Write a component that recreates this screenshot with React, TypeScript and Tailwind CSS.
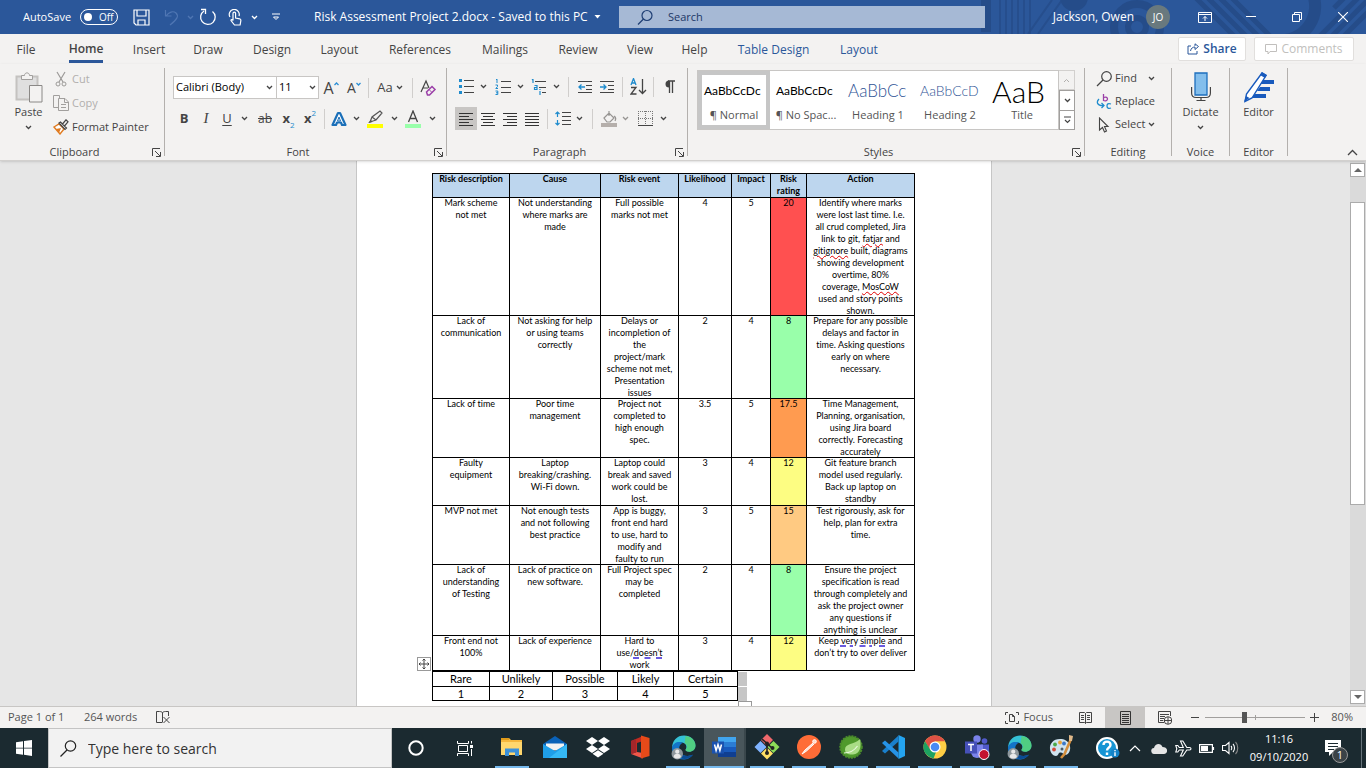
import React, { ReactNode } from "react";

type Kids = { children?: ReactNode };

/* ---------- small shared pieces ---------- */

function Chevron({ color = "#444" }: { color?: string }) {
  return (
    <svg width="7" height="5" viewBox="0 0 7 5" className="shrink-0" aria-hidden="true">
      <path d="M1 1l2.5 2.5L6 1" fill="none" stroke={color} strokeWidth="1.3" />
    </svg>
  );
}

function Svg({ w, h, children }: { w: number; h: number; children: ReactNode }) {
  return (
    <svg width={w} height={h} viewBox={`0 0 ${w} ${h}`} fill="none" className="shrink-0" aria-hidden="true">
      {children}
    </svg>
  );
}

function Tool({ label, className = "", children }: Kids & { label: string; className?: string }) {
  return (
    <button type="button" aria-label={label} className={`flex h-[23px] shrink-0 items-center justify-center ${className}`}>
      {children}
    </button>
  );
}

function Divider({ className }: { className: string }) {
  return (
    <span className={`flex h-5 shrink-0 justify-center ${className}`}>
      <span className="h-full w-px bg-[#d0cecc]" />
    </span>
  );
}

function Group({ title, className, launcher, children }: Kids & { title: string; className: string; launcher?: boolean }) {
  return (
    <>
      <section aria-label={title} className={`flex shrink-0 flex-col ${className}`}>
        <div className="h-20">{children}</div>
        <div className="flex h-4 items-center">
          <span className="flex-1 text-center">{title}</span>
          {launcher && (
            <button type="button" aria-label={`${title} settings`} className="flex w-[15px] justify-center">
              <Svg w={9} h={9}>
                <path d="M.5 8V.5H8M3 3l5 5M8.5 4v4.5H4" stroke="#444" />
              </Svg>
            </button>
          )}
        </div>
      </section>
      <span className="mt-1 h-[88px] w-px shrink-0 bg-[#b3b0ad]" />
    </>
  );
}

/* ---------- title bar ---------- */

function TitleBar() {
  return (
    <header className="relative flex h-[34px] shrink-0 items-center overflow-hidden bg-[#2b579a] text-[12px] text-white">
      <svg className="absolute top-0 right-0 opacity-80" width="400" height="34" viewBox="0 0 400 34" fill="none" aria-hidden="true">
        <g stroke="#244a86">
          <path d="M20 32V0" strokeWidth="10" />
          <path d="M34 34V0M40 34V0M46 34V0M52 34V0M58 34V0M64 34V0" strokeWidth="2" opacity=".8" />
          <path d="M62 34L86 0M72 34L96 0" strokeWidth="2" opacity=".8" />
          <circle cx="171" cy="27" r="9" strokeWidth="6" />
          <circle cx="171" cy="27" r="23" strokeWidth="8" />
          <path d="M240-4l40 40M252-4l40 40M264-4l40 40M228-4l40 40" strokeWidth="5" />
          <path d="M345-10a34 34 0 0 1-34 50" strokeWidth="12" />
          <path d="M366 36l40-40M378 36l40-40M354 36l40-40M368 8l14-14" strokeWidth="5" />
        </g>
        <circle cx="108" cy="-3" r="14" fill="#244a86" />
      </svg>
      <div className="relative flex w-[314px] shrink-0 items-center pl-[23px]">
        <label htmlFor="autosave" className="w-[57px] text-[11px]">AutoSave</label>
        <button id="autosave" type="button" role="switch" aria-checked="false" className="flex h-4 w-[38px] items-center gap-[7px] rounded-full border border-white pl-[3px] text-[10px]">
          <span className="size-2 rounded-full bg-white" />
          <span>Off</span>
        </button>
        <Tool label="Save" className="ml-[11px] w-6">
          <Svg w={17} h={17}>
            <path d="M1 1h15v15H3l-2-2V1zM4 1v6h9V1M5 16v-5h7v5" stroke="#fff" strokeWidth="1.2" />
          </Svg>
        </Tool>
        <Tool label="Undo" className="ml-[5px] w-7">
          <Svg w={16} h={17}>
            <path d="M1.500 1v6h6M2 7C5 3 9 1.500 12 4c3 3 1.500 6-6 12" stroke="#4f76b3" strokeWidth="1.200" />
          </Svg>
        </Tool>
        <Tool label="Undo history" className="w-2"><Chevron color="#4f76b3" /></Tool>
        <Tool label="Redo" className="w-7">
          <Svg w={18} h={18}>
            <path d="M13.500 3.500A7.300 7.300 0 1 1 5 3M2 1.500h4.500V6" stroke="#fff" strokeWidth="1.300" />
          </Svg>
        </Tool>
        <Tool label="Touch mode" className="w-[26px]">
          <Svg w={14} h={17}>
            <path d="M5 9V4.500a1.300 1.300 0 0 1 2.600 0V9l4 .8c1 .3 1.400 1 1.200 2l-.7 4.200H6.500L3 11.500c0-1.500 1.500-1 2 0zM2 8a5 5 0 1 1 9-1" stroke="#fff" strokeWidth="1.200" />
          </Svg>
        </Tool>
        <Tool label="Touch mode options" className="w-3"><Chevron color="#fff" /></Tool>
        <Tool label="Customise quick access" className="ml-2 w-4">
          <Svg w={8} h={8}>
            <path d="M0 1h8M1.500 4L4 6.500 6.500 4z" stroke="#fff" />
          </Svg>
        </Tool>
      </div>
      <div className="relative flex w-[305px] shrink-0 items-center gap-[6px] whitespace-nowrap">
        <h1>Risk Assessment Project 2.docx - Saved to this PC</h1>
        <Svg w={7} h={4}><path d="M.5 0h6L3.500 3.500z" fill="#fff" /></Svg>
      </div>
      <label className="relative flex h-[22px] w-[366px] items-center gap-[14px] bg-[#a6b9d5] pl-[18px]">
        <Svg w={17} h={17}>
          <circle cx="10" cy="6.500" r="5" stroke="#1f3f74" strokeWidth="1.200" />
          <path d="M6.500 10L1 15.500" stroke="#1f3f74" strokeWidth="1.200" />
        </Svg>
        <input aria-label="Search" placeholder="Search" className="w-full bg-transparent text-[11px] outline-none placeholder:text-[#1c3766]" />
      </label>
      <div className="relative flex flex-1 items-center justify-end">
        <span className="mr-3">Jackson, Owen</span>
        <span className="mr-3 flex size-6 items-center justify-center rounded-full bg-[#69797e] text-[10px]">JO</span>
        <Tool label="Ribbon display options" className="w-[46px]">
          <Svg w={14} h={11}>
            <path d="M.5.5h13v10H.5zM.5 2.500h13M7 9V4.500M5 6.500l2-2 2 2" stroke="#fff" />
          </Svg>
        </Tool>
        <Tool label="Minimise" className="w-[46px]"><Svg w={10} h={2}><path d="M0 .5h10" stroke="#fff" /></Svg></Tool>
        <Tool label="Restore" className="w-[46px]">
          <Svg w={10} h={10}><path d="M.5 2.500h7v7h-7zM2.500 2.500v-2h7v7h-2" stroke="#fff" /></Svg>
        </Tool>
        <Tool label="Close" className="w-[46px]">
          <Svg w={10} h={10}><path d="M0 0l10 10M10 0L0 10" stroke="#fff" strokeWidth="1.100" /></Svg>
        </Tool>
      </div>
    </header>
  );
}

/* ---------- tabs ---------- */

const tabs: [string, string][] = [
  ["File", "w-[52px]"], ["Home", "w-[68px]"], ["Insert", "w-[58px]"], ["Draw", "w-[60px]"], ["Design", "w-[68px]"],
  ["Layout", "w-[67px]"], ["References", "w-[94px]"], ["Mailings", "w-[76px]"], ["Review", "w-[70px]"], ["View", "w-[54px]"],
  ["Help", "w-[55px]"], ["Table Design", "w-[103px]"], ["Layout", "w-[68px]"],
];

function Tabs() {
  return (
    <nav className="flex h-[30px] shrink-0 items-center text-[12px] text-[#444]">
      {tabs.map(([name, width], i) => (
        <button key={i} type="button" className={`flex h-full shrink-0 items-center justify-center ${width}`}>
          <span className={
            i === 1 ? "border-b-[3px] border-[#2b579a] pt-1 pb-[2px] leading-[18px] font-semibold"
              : i > 10 ? "pt-px text-[#2b579a]" : "pt-px"
          }>{name}</span>
        </button>
      ))}
      <div className="flex flex-1 justify-end gap-2 pr-3">
        <button type="button" className="flex h-6 w-[68px] items-center justify-center gap-1 rounded-[2px] border border-[#e1dfdd] bg-white font-semibold text-[#2b579a]">
          <Svg w={12} h={12}>
            <path d="M4 3H1v8h9V8M3.500 8C4 5 6 4 8 4v2.500L11.500 3.500 8 .8V3" stroke="#2b579a" />
          </Svg>
          Share
        </button>
        <button type="button" disabled className="flex h-6 w-[100px] items-center justify-center gap-1 rounded-[2px] border border-[#e1dfdd] bg-white text-[#c1bfbd]">
          <Svg w={12} h={11}>
            <path d="M.5.500h11v7H5L3 10V7.500H.5z" stroke="#c1bfbd" />
          </Svg>
          Comments
        </button>
      </div>
    </nav>
  );
}

/* ---------- ribbon ---------- */

function Clipboard() {
  return (
    <Group title="Clipboard" launcher className="w-[164px]">
      <div className="flex">
        <button type="button" className="flex w-[53px] flex-col items-center pt-2 pl-1 leading-[18px]">
          <Svg w={28} h={31}>
            <path d="M1.500 4.500h21v23h-21z" fill="#dfdfdf" stroke="#c4c2c0" strokeWidth="2" />
            <path d="M6.500 7.500V3.500h3C9.500 0 14.500 0 14.500 3.500h3v4z" fill="#f3f2f1" stroke="#a19f9d" />
            <path d="M14.500 13.500h12.500v16.500H14.500z" fill="#f3f2f1" stroke="#8a8886" />
          </Svg>
          <span className="mb-1">Paste</span>
          <Chevron />
        </button>
        <div className="flex flex-col pt-[3px]">
          <button type="button" disabled className="flex h-6 items-center gap-[3px] text-[#b1afad]">
            <Svg w={16} h={17}>
              <path d="M4 1l6 10M12 1L6 11" stroke="#9c9a98" strokeWidth="1.200" />
              <circle cx="5" cy="13" r="2" stroke="#9c9a98" /><circle cx="11" cy="13" r="2" stroke="#9c9a98" />
            </Svg>
            Cut
          </button>
          <button type="button" disabled className="flex h-6 items-center gap-[3px] text-[#b1afad]">
            <Svg w={16} h={16}>
              <path d="M5 12.500H.5V.5h6v3M5.500 3.500H12l3.500 3.500v8.500h-10zM11.500 3.500v4h4M8 9.500h5M8 12.500h5" stroke="#a19f9d" />
            </Svg>
            Copy
          </button>
          <button type="button" className="flex h-6 items-center gap-[3px]">
            <Svg w={16} h={16}>
              <path d="M1 8l5-3 5 5-4 5z" fill="#fff" stroke="#e07b20" strokeWidth="1.400" />
              <path d="M3 10l5-1-2 5z" fill="#e07b20" />
              <path d="M6 4l1.500-1 6 6L12 10.500zM9.500 5L13 .8l2 2L11.500 7" fill="#f3f2f1" stroke="#444" strokeWidth="1.200" />
            </Svg>
            Format Painter
          </button>
        </div>
      </div>
    </Group>
  );
}

function FontGroup() {
  return (
    <Group title="Font" launcher className="w-[281px]">
      <div className="flex items-center pt-3 pl-2">
        <div className="relative w-[104px]">
          <select aria-label="Font" className="h-[23px] w-full appearance-none border border-[#c8c6c4] bg-white pl-[2px] text-black">
            <option>Calibri (Body)</option>
          </select>
          <span className="pointer-events-none absolute top-[9px] right-1"><Chevron /></span>
        </div>
        <div className="relative -ml-px w-[43px]">
          <select aria-label="Font size" className="h-[23px] w-full appearance-none border border-[#c8c6c4] bg-white pl-[2px] text-black">
            <option>11</option>
          </select>
          <span className="pointer-events-none absolute top-[9px] right-[3px]"><Chevron /></span>
        </div>
        <Tool label="Grow font" className="w-6">
          <span className="text-[16px] leading-4">A</span>
          <Svg w={5} h={14}><path d="M.5 4l2-2 2 2" stroke="#2b8fd6" strokeWidth="1.300" /></Svg>
        </Tool>
        <Tool label="Shrink font" className="w-[22px]">
          <span className="text-[14px] leading-4">A</span>
          <Svg w={5} h={14}><path d="M.5 2l2 2 2-2" stroke="#2b8fd6" strokeWidth="1.300" /></Svg>
        </Tool>
        <Divider className="w-[7px]" />
        <Tool label="Change case" className="w-[36px] gap-[3px]">
          <span className="text-[13px]">Aa</span><Chevron />
        </Tool>
        <Divider className="w-2" />
        <Tool label="Clear formatting" className="relative w-6">
          <Svg w={18} h={18}>
            <path d="M2 13L7 2l3 7M4 9h5" stroke="#444" strokeWidth="1.200" />
            <path d="M7.500 13L13 7.500l3 3-5.500 5.500h-2z" fill="#f3f2f1" stroke="#9b3fa8" strokeWidth="1.500" /><path d="M10 10.500l3 3" stroke="#9b3fa8" />
          </Svg>
        </Tool>
      </div>
      <div className="flex items-center pt-2 pl-2 text-[14px]">
        <Tool label="Bold" className="w-[22px]"><b className="text-[13px]">B</b></Tool>
        <Tool label="Italic" className="w-[22px]"><i className="font-['Liberation_Serif',serif] text-[15px]">I</i></Tool>
        <Tool label="Underline" className="w-5"><u className="text-[13px] underline-offset-2">U</u></Tool>
        <Tool label="Underline style" className="w-[15px]"><Chevron /></Tool>
        <Tool label="Strikethrough" className="w-[26px]"><s className="text-[12px]">ab</s></Tool>
        <Tool label="Subscript" className="w-[21px]"><b className="text-[13px]">x</b><span className="pt-3 text-[8px] text-[#1e8bcd]">2</span></Tool>
        <Tool label="Superscript" className="w-[22px]"><b className="text-[13px]">x</b><span className="pb-3 text-[8px] text-[#1e8bcd]">2</span></Tool>
        <Divider className="w-[7px]" />
        <Tool label="Text effects" className="w-[22px]">
          <Svg w={16} h={16}>
            <path d="M1.500 14L7 2h2l5.500 12H11l-1-2.500H6L5 14z" fill="#fff" stroke="#1a6fb8" strokeWidth="2.200" strokeLinejoin="round" />
            <path d="M8 6l1.500 4h-3z" fill="#f3f2f1" stroke="#1a6fb8" />
          </Svg>
        </Tool>
        <Tool label="Text effect options" className="w-3"><Chevron /></Tool>
        <Tool label="Highlight" className="w-[26px]">
          <Svg w={16} h={18}>
            <path d="M0 14h16v4H0z" fill="#ffff00" />
            <path d="M3 12l2-5 8-6 2 2-6 7-3 1zM5 7l4 3" stroke="#555" strokeWidth="1.200" /><path d="M1 13l3-3 1.500 2z" fill="#555" />
          </Svg>
        </Tool>
        <Tool label="Highlight colour" className="w-3"><Chevron /></Tool>
        <Tool label="Font colour" className="w-[26px]">
          <Svg w={16} h={18}>
            <path d="M0 14h16v4H0z" fill="#99ffaa" />
            <path d="M3.500 12L8 1l4.500 11M5 8.500h6" stroke="#444" strokeWidth="1.300" />
          </Svg>
        </Tool>
        <Tool label="Font colour options" className="w-3"><Chevron /></Tool>
      </div>
    </Group>
  );
}

function AlignIcon({ rows }: { rows: string }) {
  return <Svg w={14} h={14}><path d={rows} stroke="#333" strokeWidth="1" /></Svg>;
}

function Paragraph() {
  return (
    <Group title="Paragraph" launcher className="w-[240px]">
      <div className="flex items-center pt-[11px] pl-2">
        <Tool label="Bullets" className="w-[22px]">
          <Svg w={16} h={15}>
            <path d="M1 0h3v3H1zM1 6h3v3H1zM1 12h3v3H1z" fill="#1e8bcd" /><path d="M6 1.500h10M6 7.500h10M6 13.500h10" stroke="#444" />
          </Svg>
        </Tool>
        <Tool label="Bullet styles" className="w-[13px]"><Chevron /></Tool>
        <Tool label="Numbering" className="w-[25px]">
          <Svg w={16} h={16}>
            <path d="M1 1l1-1v4M.5 6h2v1.500L.8 9.500H3M.5 12h2.300v3.500H.5M1 13.800h2" stroke="#1e8bcd" /><path d="M6 2.500h10M6 8.500h10M6 13.500h10" stroke="#444" />
          </Svg>
        </Tool>
        <Tool label="Number styles" className="w-[11px]"><Chevron /></Tool>
        <Tool label="Multilevel list" className="w-[25px]">
          <Svg w={16} h={16}>
            <path d="M1 1l1-1v4M3.500 6.500h2.500v4H3.500v-2H6M9 10v1M9 12v4" stroke="#1e8bcd" strokeWidth="1.200" /><path d="M4 2.500h11M8 8.500h7M11 13.500h4" stroke="#444" />
          </Svg>
        </Tool>
        <Tool label="Multilevel styles" className="w-[11px]"><Chevron /></Tool>
        <Divider className="w-3" />
        <Tool label="Decrease indent" className="w-[22px]">
          <Svg w={15} h={14}>
            <path d="M0 1.500h14M8 5.500h6M8 9.500h6M0 12.500h14" stroke="#444" /><path d="M7 7H1M3.500 4.500L1 7l2.500 2.500" stroke="#1e8bcd" strokeWidth="1.300" />
          </Svg>
        </Tool>
        <Tool label="Increase indent" className="w-[22px]">
          <Svg w={15} h={14}>
            <path d="M0 1.500h14M8 5.500h6M8 9.500h6M0 12.500h14" stroke="#444" /><path d="M0 7h6M3.500 4.500L6 7 3.500 9.500" stroke="#1e8bcd" strokeWidth="1.300" />
          </Svg>
        </Tool>
        <Divider className="w-2" />
        <Tool label="Sort" className="w-6">
          <Svg w={17} h={17}>
            <path d="M1 7l2.500-6.500L6 7M1.800 5h3.400" stroke="#1e8bcd" strokeWidth="1.300" /><path d="M1 9.500h5L1 16h5.500M12.500 1v14M9 12l3.500 3.500L16 12" stroke="#444" strokeWidth="1.300" />
          </Svg>
        </Tool>
        <Divider className="w-[7px]" />
        <Tool label="Show paragraph marks" className="w-6">
          <Svg w={11} h={13}><path d="M5 7.500A3.500 3.500 0 0 1 5 .5z" fill="#444" /><path d="M4 1h7M5.500 1v12M8.500 1v12" stroke="#444" strokeWidth="1.300" /></Svg>
        </Tool>
      </div>
      <div className="flex items-center pt-[9px] pl-2">
        <button type="button" aria-label="Align left" aria-pressed="true" className="flex h-[23px] w-[22px] items-center justify-center bg-[#c8c6c4]">
          <AlignIcon rows="M0 1.500h14M0 4.500h10M0 7.500h14M0 10.500h10M0 13.500h14" />
        </button>
        <Tool label="Centre" className="w-[22px]"><AlignIcon rows="M0 1.500h14M2 4.500h10M0 7.500h14M2 10.500h10M0 13.500h14" /></Tool>
        <Tool label="Align right" className="w-[22px]"><AlignIcon rows="M0 1.500h14M4 4.500h10M0 7.500h14M4 10.500h10M0 13.500h14" /></Tool>
        <Tool label="Justify" className="w-[22px]"><AlignIcon rows="M0 1.500h14M0 4.500h14M0 7.500h14M0 10.500h14M0 13.500h14" /></Tool>
        <Divider className="w-2" />
        <Tool label="Line spacing" className="w-6">
          <Svg w={16} h={15}>
            <path d="M2.500 1v5M.5 3l2-2 2 2M2.500 9v5M.5 12l2 2 2-2" stroke="#1e8bcd" strokeWidth="1.200" /><path d="M7 1.500h9M7 5.500h9M7 9.500h9M7 13.500h9" stroke="#444" />
          </Svg>
        </Tool>
        <Tool label="Line spacing options" className="w-[9px]"><Chevron /></Tool>
        <Divider className="w-[17px]" />
        <Tool label="Shading" className="w-4">
          <Svg w={16} h={16}>
            <path d="M0 12h16v4H0z" fill="#b5afab" /><path d="M3 7l5-5 5 5-4 4H6zM8 5V0M13 5c2 1 2 3 1 5" stroke="#979593" strokeWidth="1.200" />
          </Svg>
        </Tool>
        <Tool label="Shading options" className="w-[17px]"><Chevron color="#979593" /></Tool>
        <Tool label="Borders" className="w-[22px]">
          <Svg w={15} h={15}>
            <path d="M.5 0v14M14.500 0v14M0 .5h15M7.500 0v14M0 7.500h15" stroke="#777" strokeDasharray="1 1" /><path d="M0 14.500h15" stroke="#444" />
          </Svg>
        </Tool>
        <Tool label="Border options" className="w-[14px]"><Chevron /></Tool>
      </div>
    </Group>
  );
}

const styleCards = [
  { name: "¶ Normal", sample: "AaBbCcDc", look: "text-[12px] text-black", on: true },
  { name: "¶ No Spac...", sample: "AaBbCcDc", look: "text-[12px] text-black" },
  { name: "Heading 1", sample: "AaBbCc", look: "text-[17px] text-[#2f5496] font-light" },
  { name: "Heading 2", sample: "AaBbCcD", look: "text-[14px] text-[#2f5496] font-light" },
  { name: "Title", sample: "AaB", look: "text-[30px] text-black font-light" },
];

function Styles() {
  return (
    <Group title="Styles" launcher className="w-[396px]">
      <div className="flex pt-[6px] pl-[9px]">
        <div className="flex h-[60px] border border-[#c8c6c4] bg-white">
          {styleCards.map((s) => (
            <button key={s.name} type="button" className={`flex w-[72px] flex-col items-center overflow-hidden ${s.on ? "border-4 border-[#c6c6c6]" : "p-1"}`}>
              <span className="flex h-8 w-[60px] items-center">
                <span className={`font-[Lato,'Open_Sans',sans-serif] leading-7 whitespace-nowrap ${s.look}`}>{s.sample}</span>
              </span>
              <span className="leading-4 whitespace-nowrap text-[#555]">{s.name}</span>
            </button>
          ))}
        </div>
        <div className="flex w-4 flex-col">
          <button type="button" aria-label="Previous styles" className="flex flex-1 items-center justify-center border border-l-0 border-[#d2d0ce]">
            <Svg w={7} h={5}><path d="M1 4l2.500-2.500L6 4" stroke="#b1afad" /></Svg>
          </button>
          <button type="button" aria-label="Next styles" className="flex flex-1 items-center justify-center border border-[#a19f9d] bg-white"><Chevron /></button>
          <button type="button" aria-label="More styles" className="flex flex-1 items-center justify-center border border-t-0 border-[#a19f9d] bg-white">
            <Svg w={7} h={8}><path d="M0 1h7M1 4l2.500 2.500L6 4" stroke="#444" strokeWidth="1.200" /></Svg>
          </button>
        </div>
      </div>
    </Group>
  );
}

function Editing() {
  return (
    <Group title="Editing" className="w-[86px]">
      <div className="flex flex-col pt-[3px] pl-[11px]">
        <button type="button" className="flex h-[23px] items-center gap-[3px]">
          <Svg w={16} h={16}><circle cx="10.500" cy="5.500" r="4.800" stroke="#444" strokeWidth="1.200" /><path d="M7 9l-6 6" stroke="#444" strokeWidth="1.200" /></Svg>
          <span className="mr-[8px]">Find</span><Chevron />
        </button>
        <button type="button" className="flex h-[23px] items-center gap-[3px]">
          <Svg w={16} h={16}>
            <path d="M7.500 0v7M7.500 3.500c3-1 4 0 4 1.500s-2 2.500-4 1.500" stroke="#9b3fa8" strokeWidth="1.300" />
            <path d="M15 10c-3-1-4 0-4 2s1.500 3 4 2" stroke="#1e8bcd" strokeWidth="1.300" />
            <path d="M3 5C0 8 1 12 8 11.500M5.500 9L8 11.500 5.500 14" stroke="#1e8bcd" strokeWidth="1.300" />
          </Svg>
          Replace
        </button>
        <button type="button" className="flex h-[23px] items-center gap-[3px]">
          <Svg w={16} h={16}><path d="M3.500 1v12l3-2.500 2 4.500 2-1-2-4.500H12z" stroke="#444" strokeWidth="1.100" /></Svg>
          Select<Chevron />
        </button>
      </div>
    </Group>
  );
}

function Ribbon() {
  return (
    <div className="relative z-10 flex h-[97px] shrink-0 border-b border-[#d2d0ce] text-[11px] text-[#444] shadow-sm">
      <Clipboard />
      <FontGroup />
      <Paragraph />
      <Styles />
      <Editing />
      <Group title="Voice" className="w-[57px]">
        <button type="button" className="flex w-full flex-col items-center pt-2 leading-[18px]">
          <Svg w={20} h={31}>
            <path d="M4 1h12v22H4z" fill="#83beec" stroke="#1e6fbd" strokeWidth="1.300" />
            <path d="M.6 15v6c0 3 2 4.500 4.500 4.500h10c2.500 0 4.300-1.500 4.300-4.500v-6M10 25.500V28M5.500 28.500h9" stroke="#444" strokeWidth="1.200" />
          </Svg>
          <span className="mb-1">Dictate</span>
          <Chevron />
        </button>
      </Group>
      <Group title="Editor" className="w-[57px]">
        <button type="button" className="flex w-full flex-col items-center pt-[7px] leading-[18px]">
          <Svg w={32} h={32}>
            <path d="M19 9h12v4H17zM17 16h10v4H14zM12 23h11v4H8z" fill="#185abd" />
            <path d="M19 2l4 2.500L9 27l-7 3.500L3.500 23z" fill="#fff" stroke="#185abd" strokeWidth="1.400" />
            <path d="M19 1l5 3-2 3-5-3zM3 25l3.500 2-5.500 4z" fill="#185abd" />
          </Svg>
          <span>Editor</span>
        </button>
      </Group>
      <div className="flex flex-1 items-end justify-end pr-2 pb-1">
        <button type="button" aria-label="Collapse ribbon">
          <Svg w={11} h={7}><path d="M1 6l4.500-4.500L10 6" stroke="#444" strokeWidth="1.300" /></Svg>
        </button>
      </div>
    </div>
  );
}

/* ---------- document ---------- */

const Spell = ({ children }: Kids) => (
  <span className="underline decoration-[#e00000] decoration-wavy decoration-1 underline-offset-1">{children}</span>
);
const Grammar = ({ children }: Kids) => (
  <span className="underline decoration-[#6a5be0] decoration-dashed decoration-2 underline-offset-1">{children}</span>
);

type Risk = { h: string; tone: string; cells: ReactNode[] };

const risks: Risk[] = [
  {
    h: "h-[118px]", tone: "bg-[#ff5050]",
    cells: ["Mark scheme\nnot met", "Not understanding\nwhere marks are\nmade", "Full possible\nmarks not met", "4", "5", "20",
      <>{"Identify where marks\nwere lost last time. I.e.\nall crud completed, Jira\nlink to git, "}<Spell>fatjar</Spell>{" and\n"}<Spell>gitignore</Spell>{" built, diagrams\nshowing development\novertime, 80%\ncoverage, "}<Spell>MosCoW</Spell>{"\nused and story points\nshown."}</>],
  },
  {
    h: "h-[83px]", tone: "bg-[#99ffaa]",
    cells: ["Lack of\ncommunication", "Not asking for help\nor using teams\ncorrectly", "Delays or\nincompletion of\nthe\nproject/mark\nscheme not met,\nPresentation\nissues", "2", "4", "8",
      "Prepare for any possible\ndelays and factor in\ntime. Asking questions\nearly on where\nnecessary."],
  },
  {
    h: "h-[59px]", tone: "bg-[#ff9b50]",
    cells: ["Lack of time", "Poor time\nmanagement", "Project not\ncompleted to\nhigh enough\nspec.", "3.5", "5", "17.5",
      "Time Management,\nPlanning, organisation,\nusing Jira board\ncorrectly. Forecasting\naccurately"],
  },
  {
    h: "h-12", tone: "bg-[#fdfd82]",
    cells: ["Faulty\nequipment", "Laptop\nbreaking/crashing.\nWi-Fi down.", "Laptop could\nbreak and saved\nwork could be\nlost.", "3", "4", "12",
      "Git feature branch\nmodel used regularly.\nBack up laptop on\nstandby"],
  },
  {
    h: "h-[59px]", tone: "bg-[#ffca82]",
    cells: ["MVP not met", "Not enough tests\nand not following\nbest practice", "App is buggy,\nfront end hard\nto use, hard to\nmodify and\nfaulty to run", "3", "5", "15",
      "Test rigorously, ask for\nhelp, plan for extra\ntime."],
  },
  {
    h: "h-[71px]", tone: "bg-[#99ffaa]",
    cells: ["Lack of\nunderstanding\nof Testing", "Lack of practice on\nnew software.", "Full Project spec\nmay be\ncompleted", "2", "4", "8",
      "Ensure the project\nspecification is read\nthrough completely and\nask the project owner\nany questions if\nanything is unclear"],
  },
  {
    h: "h-[35px]", tone: "bg-[#fdfd82]",
    cells: ["Front end not\n100%", "Lack of experience", <>{"Hard to\nuse/"}<Grammar>doesn’t</Grammar>{"\nwork"}</>, "3", "4", "12",
      <>{"Keep "}<Grammar>very simple</Grammar>{" and\ndon’t try to over deliver"}</>],
  },
];

const heads = ["Risk description", "Cause", "Risk event", "Likelihood", "Impact", "Risk\nrating", "Action"];

const scale = [["Rare", "Unlikely", "Possible", "Likely", "Certain"], ["1", "2", "3", "4", "5"]];

function ScrollBar() {
  return (
    <div className="flex w-4 shrink-0 flex-col bg-[#dadada] pt-[2px] pr-px pb-[2px]">
      <button type="button" aria-label="Scroll up" className="flex h-[14px] items-center justify-center border border-[#ababab] bg-white">
        <Svg w={8} h={4}><path d="M0 4l4-4 4 4z" fill="#666" /></Svg>
      </button>
      <div className="flex flex-1 flex-col pt-[25px]">
        <div className="h-[62%] border border-[#ababab] bg-white" />
      </div>
      <button type="button" aria-label="Scroll down" className="flex h-[14px] items-center justify-center border border-[#ababab] bg-white">
        <Svg w={8} h={4}><path d="M0 0l4 4 4-4z" fill="#666" /></Svg>
      </button>
    </div>
  );
}

function Doc() {
  return (
    <main className="flex min-h-0 flex-1 bg-[#e6e6e6] font-[Lato,'Open_Sans',sans-serif] text-black [font-variant-ligatures:none]">
      <div className="min-w-0 flex-1 overflow-hidden pr-[2px]">
        <article className="mx-auto h-full w-[636px] border-x border-[#c6c6c6] bg-white pt-3 pl-[75px]">
          <div className="relative w-[483px]">
            <table className="w-full table-fixed border-collapse text-center text-[9px] leading-3">
              <colgroup>
                <col className="w-[77px]" /><col className="w-[91px]" /><col className="w-[78px]" /><col className="w-[53px]" />
                <col className="w-[39px]" /><col className="w-[36px]" /><col />
              </colgroup>
              <thead>
                <tr className="h-6">
                  {heads.map((t) => (
                    <th key={t} className="border border-black bg-[#bdd6ee] p-0 align-top font-bold whitespace-pre">
                      <div className="-mt-px -mb-[3px]">{t}</div>
                    </th>
                  ))}
                </tr>
              </thead>
              <tbody>
                {risks.map((r, i) => (
                  <tr key={i} className={r.h}>
                    {r.cells.map((c, j) => (
                      <td key={j} className={`border border-black p-0 align-top whitespace-pre ${j === 5 ? r.tone : ""}`}>
                        <div className="-mt-px -mb-[3px]">{c}</div>
                      </td>
                    ))}
                  </tr>
                ))}
              </tbody>
            </table>
            <button type="button" aria-label="Move table" className="absolute bottom-0 -left-[15px] flex size-[14px] items-center justify-center border border-[#999] bg-white">
              <Svg w={12} h={12}>
                <path d="M6 1v10M1 6h10M4.500 2.500L6 1l1.500 1.500M4.500 9.500L6 11l1.500-1.500M2.500 4.500L1 6l1.500 1.500M9.500 4.500L11 6 9.500 7.500" stroke="#444" />
              </Svg>
            </button>
          </div>
          <div className="flex">
            <table className="w-[306px] table-fixed border-collapse text-center text-[11px] leading-[14px]">
              <colgroup>
                <col className="w-[57px]" /><col className="w-[63px]" /><col className="w-[65px]" /><col className="w-[56px]" /><col />
              </colgroup>
              <tbody>
                {scale.map((row, i) => (
                  <tr key={i} className={i === 0 ? "h-[15px]" : "h-[14px]"}>
                    {row.map((c) => <td key={c} className="border border-black p-0"><div className="-mt-px -mb-px">{c}</div></td>)}
                  </tr>
                ))}
              </tbody>
            </table>
            <div className="flex w-[9px] flex-col gap-px pt-px">
              <span className="h-[14px] bg-[#c6c6c6]" />
              <span className="h-[14px] bg-[#c6c6c6]" />
            </div>
          </div>
          <div className="ml-[306px] h-2 w-[14px] border border-[#999]" />
        </article>
      </div>
      <ScrollBar />
    </main>
  );
}

/* ---------- status bar ---------- */

function StatusBar() {
  return (
    <footer className="relative z-10 flex h-[22px] shrink-0 items-center border-t border-[#c8c6c4] bg-[#f3f2f1] text-[11px] text-[#555]">
      <span className="w-[84px] pl-2">Page 1 of 1</span>
      <span className="w-[72px]">264 words</span>
      <button type="button" aria-label="Proofing">
        <Svg w={15} h={13}>
          <path d="M6.500 11.500H.5V.5h3c1.500 0 3 .5 3 1.500v9M6.500 2c0-1 1.500-1.500 3-1.500h3V5M7.500 6l6 6M13.500 6l-6 6" stroke="#444" />
        </Svg>
      </button>
      <div className="flex h-full flex-1 items-center justify-end">
        <button type="button" className="flex items-center gap-1">
          <Svg w={14} h={12}>
            <path d="M3 .5H.5V3M11 .5h2.500V3M3 11.500H.5V9M11 11.500h2.500V9M4.500 2.500h3l2 2v5h-5zM7.500 2.500v2h2" stroke="#444" />
          </Svg>
          Focus
        </button>
        <button type="button" aria-label="Read mode" className="ml-3 flex h-full w-10 items-center justify-center">
          <Svg w={13} h={12}><path d="M.5.5h5l1 1 1-1h5v10h-5l-1 1-1-1h-5zM6.500 1.500v10M2 3.500h3M2 5.500h3M2 7.500h3M8 3.500h3M8 5.500h3M8 7.500h3" stroke="#444" /></Svg>
        </button>
        <button type="button" aria-label="Print layout" className="flex h-full w-10 items-center justify-center bg-[#c8c6c4]">
          <Svg w={11} h={14}><path d="M.5.5h10v13H.5zM2 3.500h7M2 5.500h7M2 7.500h7M2 9.500h7M2 11.500h7" stroke="#333" /></Svg>
        </button>
        <button type="button" aria-label="Web layout" className="flex h-full w-10 items-center justify-center">
          <Svg w={14} h={14}>
            <path d="M6 11.500H.5V.5h12V5M2 3.500h9M2 5.500h5M2 7.500h4M2 9.500h3" stroke="#444" />
            <circle cx="10" cy="9.500" r="3.800" stroke="#444" /><path d="M6 9.500h8M10 6v7" stroke="#444" />
          </Svg>
        </button>
        <button type="button" aria-label="Zoom out" className="ml-[6px] w-[14px]"><Svg w={8} h={8}><path d="M0 3.500h8" stroke="#444" /></Svg></button>
        <label className="relative flex h-full w-[100px] items-center">
          <span className="h-px w-full bg-[#a19f9d]" />
          <span className="absolute top-2 left-[50px] h-[5px] w-px bg-[#a19f9d]" />
          <input
            type="range" aria-label="Zoom" defaultValue={39}
            className="absolute inset-0 h-full w-full appearance-none bg-transparent [&::-webkit-slider-thumb]:h-[11px] [&::-webkit-slider-thumb]:w-[5px] [&::-webkit-slider-thumb]:appearance-none [&::-webkit-slider-thumb]:bg-[#555]"
          />
        </label>
        <button type="button" aria-label="Zoom in" className="ml-[5px] w-[18px]"><Svg w={9} h={9}><path d="M0 4.500h9M4.500 0v9" stroke="#444" /></Svg></button>
        <span className="mr-[13px] w-[25px] text-right">80%</span>
      </div>
    </footer>
  );
}

/* ---------- taskbar ---------- */

const Edge = () => (
  <svg width="25" height="25" viewBox="0 0 24 24" fill="none" aria-hidden="true">
    <path d="M1 13C1 5 6 .5 12.500.5 19 .5 23.500 5 23.500 10c0 4-3 6-6 6-2.500 0-4-1-3.500-2 1.500-2 1-5.500-2.500-6.500C7 6.500 2 8.500 1 13z" fill="#35c1d6" />
    <path d="M14 1c6 .5 9.500 5 9.500 9 0 4-3 6-6 6-2.500 0-4-1-3.500-2 2-2 1.500-5-1-6z" fill="#5ad266" opacity=".75" />
    <path d="M1 12c1-4.500 6-6.500 10.500-4.500C7.500 9 7 14 9 17c2 3 7 4 12 2-2.500 3.500-6 4.500-9 4.500C5 23.500.5 18 1 12z" fill="#1374c8" />
    <path d="M9 17c2 3 7 4 12 2-3 4-8 5-12 3-3-2-4-6-2-9 0 1 .8 3 2 4z" fill="#0b4a92" />
    <circle cx="6" cy="18" r="5.500" fill="#8e979c" /><circle cx="6" cy="16" r="2" fill="#e8e8e8" /><path d="M2.500 21c0-4 7-4 7 0-2 2-5 2-7 0z" fill="#e8e8e8" />
  </svg>
);

const Explorer = () => (
  <Svg w={24} h={24}>
    <path d="M1 3h8l2 2h11v15H1z" fill="#f5b73d" /><path d="M1 7h21v13H1z" fill="#ffd76e" /><path d="M1 3h8v2H1z" fill="#e09b1a" />
    <path d="M5 13.500h14V21h-4v-3.500H9V21H5z" fill="#3d91d9" />
  </Svg>
);
const Mail = () => (
  <Svg w={24} h={24}>
    <path d="M0 9l12-8 12 8v4H0z" fill="#0a62b8" /><path d="M3 8.500h18v7H3z" fill="#f2f2f2" />
    <path d="M0 9l12 7 12-7v14H0z" fill="#1f9ee8" /><path d="M24 9L6 23h18z" fill="#35b8f5" />
  </Svg>
);
const Dropbox = () => (
  <Svg w={24} h={22}>
    <path d="M6 1l6 4-6 4-6-4zM18 1l6 4-6 4-6-4zM6 9l6 4-6 4-6-4zM18 9l6 4-6 4-6-4zM12 14.200l5.500 3.600L12 21.500l-5.500-3.700z" fill="#fff" />
  </Svg>
);
const Office = () => (
  <Svg w={19} h={24}>
    <path d="M0 6L12 1v5L6 8v9l-6 2z" fill="#c02b22" /><path d="M0 19l6-2 6 1v5.500z" fill="#f0574a" />
    <path d="M10 .5L18.500 3v18L10 23.500z" fill="#e64a19" /><path d="M0 6l5-2v13.500L0 19z" fill="#a3262a" />
  </Svg>
);
const Word = () => (
  <Svg w={24} h={24}>
    <path d="M6 2h18v5.500H6z" fill="#41a5ee" /><path d="M6 7h18v5.500H6z" fill="#2b7cd3" /><path d="M6 12h18v5.500H6z" fill="#185abd" /><path d="M6 17h18v5H6z" fill="#103f91" />
    <path d="M0 6.500h12v12H0z" fill="#1a52b0" />
    <path d="M2.500 9.500l1.600 6 1.900-6 1.900 6 1.600-6" stroke="#fff" strokeWidth="1.500" />
  </Svg>
);
const Git = () => (
  <Svg w={26} h={26}>
    <path d="M13 0l6 6-6 6-6-6z" fill="#f0686c" /><path d="M6.500 7l6 6-6 6L.5 13z" fill="#80b3ff" /><path d="M19.500 7l6 6-6 6-6-6z" fill="#8ddb58" /><path d="M13 13.500l6 6-6 6-6-6z" fill="#ffe066" />
    <path d="M8 5l10 9M13 9v11" stroke="#222" strokeWidth="1.600" /><circle cx="13" cy="9.500" r="2" fill="#222" /><circle cx="18.500" cy="14" r="2" fill="#222" /><circle cx="13" cy="19" r="2" fill="#222" />
  </Svg>
);
const Postman = () => (
  <Svg w={24} h={24}>
    <circle cx="12" cy="12" r="12" fill="#ff6c37" /><circle cx="17.500" cy="6.500" r="1.800" fill="#ffd9c8" stroke="#fff" />
    <path d="M16 8l-8 7-3 4 4.500-3L17 9" fill="#ffd9c8" stroke="#fff" />
  </Svg>
);
const Spring = () => (
  <Svg w={24} h={24}>
    <circle cx="12" cy="12" r="10.800" fill="#4f9a2c" stroke="#4b8c2c" strokeWidth="2" strokeDasharray="2 1" />
    <path d="M21 4c1.500 8 0 15-7 15.500-4 .5-8-1-8-5C6 8 15 10 21 4z" fill="#a9dc86" /><path d="M5 18c6 0 10-2 13.500-7" stroke="#e8f7dc" strokeWidth="1.200" />
  </Svg>
);
const VSCode = () => (
  <Svg w={24} h={24}>
    <path d="M17.500 0L24 3v18l-6.500 3z" fill="#24a4f0" />
    <path d="M17.500.5v6L4 18.500 1 16z" fill="#1a80cc" /><path d="M17.500 23.500v-6L4 5.500 1 8z" fill="#2693e6" />
  </Svg>
);
const Chrome = () => (
  <Svg w={24} h={24}>
    <circle cx="12" cy="12" r="11.500" fill="#ffce44" />
    <path d="M2 6.200A11.500 11.500 0 0 1 22 6.200H12L7 15z" fill="#de5145" />
    <path d="M2 6.200L7.500 15 13 17l-2.500 6.400A11.500 11.500 0 0 1 2 6.200z" fill="#1da261" />
    <circle cx="12" cy="12" r="5.500" fill="#fff" /><circle cx="12" cy="12" r="4.300" fill="#4a8af4" />
  </Svg>
);
const Teams = () => (
  <Svg w={26} h={25}>
    <circle cx="20.500" cy="6" r="2.800" fill="#5059c9" /><circle cx="13" cy="4" r="3.700" fill="#7b83eb" />
    <path d="M17 9.500h8V16a4 4 0 0 1-8 2z" fill="#5059c9" /><path d="M7 9.500h12V17a6 6 0 0 1-12 0z" fill="#7b83eb" />
    <path d="M1 6.500h12v12H1z" fill="#4650b8" /><path d="M4 9.500h6M7 9.500v6.500" stroke="#fff" strokeWidth="1.500" />
    <circle cx="20" cy="19.500" r="5" fill="#c4122f" stroke="#fff" />
  </Svg>
);
const Paint = () => (
  <Svg w={25} h={25}>
    <path d="M11 4C4 4 .5 9 1 14c.5 4 3 7 6 7 2.500 0 2-3 4-3.500 3-.5 4 3.500 7 2 3-2 4-6 2.500-10C19 6 15.500 4 11 4z" fill="#cfe3ef" />
    <circle cx="11" cy="7.500" r="1.900" fill="#e8a33c" /><circle cx="6" cy="9.500" r="1.900" fill="#49a84a" /><circle cx="5" cy="14.500" r="1.900" fill="#d34a3a" /><circle cx="15" cy="8.500" r="1.900" fill="#3c78c8" /><circle cx="13" cy="14" r="1.500" fill="#4b5a66" />
    <path d="M22 4L15.500 19l-3.500 4" stroke="#d48e3c" strokeWidth="2.600" /><path d="M20 0l4 1-1 5h-3z" fill="#e0b98a" />
  </Svg>
);

const apps: { name: string; icon: ReactNode; open?: boolean; wide?: boolean; active?: boolean }[] = [
  { name: "File Explorer", icon: <Explorer />, open: true, wide: true },
  { name: "Mail", icon: <Mail />, wide: true },
  { name: "Dropbox", icon: <Dropbox />, wide: true },
  { name: "Office", icon: <Office />, wide: true },
  { name: "Edge", icon: <Edge />, open: true },
  { name: "Word", icon: <Word />, open: true, active: true },
  { name: "Git", icon: <Git />, open: true },
  { name: "Postman", icon: <Postman />, open: true },
  { name: "Spring Tools", icon: <Spring />, open: true },
  { name: "VS Code", icon: <VSCode />, open: true },
  { name: "Chrome", icon: <Chrome />, open: true },
  { name: "Teams", icon: <Teams />, open: true },
  { name: "Edge profile", icon: <Edge />, open: true },
  { name: "Paint", icon: <Paint />, open: true },
];

function Tray({ label, className, children }: Kids & { label: string; className: string }) {
  return <button type="button" aria-label={label} className={`flex h-full shrink-0 items-center justify-center ${className}`}>{children}</button>;
}

function Taskbar() {
  return (
    <div className="flex h-10 shrink-0 items-center bg-[#1b2a30] text-[12px] text-white">
      <Tray label="Start" className="w-12">
        <Svg w={16} h={16}><path d="M0 2.300l7-1v6.400H0zM8 1.100L16 0v7.700H8zM0 8.500h7v6.300l-7-1zM8 8.500h8V16l-8-1.200z" fill="#fff" /></Svg>
      </Tray>
      <label className="flex h-10 w-[344px] shrink-0 items-center gap-[11px] border border-[#c4c4c4] bg-[#f2f2f2] pl-[11px]">
        <Svg w={17} h={17}><circle cx="10.500" cy="6" r="5.200" stroke="#222" strokeWidth="1.200" /><path d="M7 10l-6.500 6.500" stroke="#222" strokeWidth="1.200" /></Svg>
        <input aria-label="Type here to search" placeholder="Type here to search" className="min-w-0 flex-1 bg-transparent text-[14px] outline-none placeholder:text-[#333]" />
      </label>
      <Tray label="Cortana" className="w-12"><Svg w={16} h={16}><circle cx="8" cy="8" r="6.700" stroke="#fff" strokeWidth="2" /></Svg></Tray>
      <Tray label="Task view" className="w-[50px]">
        <Svg w={17} h={15}><path d="M.5 0v2.500h11V0M1.500 4.500h9v6h-9zM.5 15v-2.500h11V15M14.500 0v2.500M14.500 8v7" stroke="#fff" /><path d="M13 4h3v3h-3z" fill="#fff" /></Svg>
      </Tray>
      {apps.map((a) => (
        <button key={a.name} type="button" aria-label={a.name} className={`flex h-full shrink-0 flex-col items-center justify-between ${a.wide ? "w-[43px]" : "w-[42px]"} ${a.active ? "border-r-2 border-[#3a474c] bg-[#49565b]" : ""}`}>
          <span className="flex h-[38px] items-center">{a.icon}</span>
          <span className={`h-[2px] ${a.active ? "w-full" : "w-[34px]"} ${a.open ? "bg-[#76b9ed]" : ""}`} />
        </button>
      ))}
      <div className="flex h-full flex-1 items-center justify-end">
        <Tray label="Help" className="w-[30px]">
          <Svg w={24} h={24}>
            <circle cx="11" cy="12" r="10" fill="#1695d4" stroke="#fff" strokeWidth="2" /><path d="M7.500 9c0-4.500 7-4.500 7 0 0 2.500-3.500 2.500-3.500 5.500M11 16.500v2.500" stroke="#fff" strokeWidth="2.400" />
            <circle cx="19" cy="17" r="4.500" fill="#1483c8" /><path d="M19 14v1.200M19 16.200V20" stroke="#fff" strokeWidth="1.400" />
          </Svg>
        </Tray>
        <Tray label="Show hidden icons" className="w-6"><Svg w={12} h={7}><path d="M1 6l5-5 5 5" stroke="#fff" strokeWidth="1.200" /></Svg></Tray>
        <Tray label="OneDrive" className="w-6"><Svg w={16} h={11}><path d="M3.500 11a3 3 0 0 1-.5-6C4 0 10-.5 11.500 4 15 4 16.500 6 16 8.500c-.3 1.500-1.500 2.500-3 2.500z" fill="#e4e4e4" /></Svg></Tray>
        <Tray label="Airplane mode" className="w-6">
          <Svg w={17} h={17}><path d="M.8 5.500h2l1.500 2h4L5.500 1h2.300l4 6.500h2.700c2 0 2 2.500 0 2.500h-2.700l-4 6H5.500l2.800-6h-4l-1.500 2h-2l1-3.200z" stroke="#fff" strokeWidth="1.100" /></Svg>
        </Tray>
        <Tray label="Battery" className="w-6"><Svg w={16} h={9}><path d="M.6.6h12.800v7.800H.6zM14.500 3v3" stroke="#fff" strokeWidth="1.200" /><path d="M2 2h7v5H2z" fill="#fff" /></Svg></Tray>
        <Tray label="Volume" className="w-[22px]">
          <Svg w={17} h={14}><path d="M.5 4.500h3L7 1.500v11l-3.500-3h-3zM9 5c1 1 1 3 0 4M11 3c2 2 2 6 0 8" stroke="#fff" strokeWidth="1.100" /><path d="M13.500 1c3 3 3 9 0 12" stroke="#888" strokeWidth="1.100" /></Svg>
        </Tray>
        <div className="flex w-[76px] flex-col items-center text-[11px] leading-[18px]">
          <time>11:16</time>
          <time>09/10/2020</time>
        </div>
        <button type="button" aria-label="1 notification" className="relative h-full w-11">
          <svg className="absolute top-3 left-2" width="16" height="16" viewBox="0 0 16 16" fill="none" aria-hidden="true">
            <path d="M0 0h16v12H8l-4 4v-4H0z" fill="#fff" /><path d="M3 3.500h10M3 6.500h10M3 9.500h6" stroke="#1b2a30" />
          </svg>
          <span className="absolute top-[19px] left-[15px] flex size-4 items-center justify-center rounded-full border border-[#999] bg-[#3b4347] text-[11px]">1</span>
        </button>
        <span className="h-full w-[5px] border-l border-[#66737a]" />
      </div>
    </div>
  );
}

export default function App() {
  return (
    <div className="flex h-screen flex-col overflow-hidden bg-[#f3f2f1] font-['Open_Sans','Noto_Sans',sans-serif]">
      <TitleBar />
      <Tabs />
      <Ribbon />
      <Doc />
      <StatusBar />
      <Taskbar />
    </div>
  );
}
